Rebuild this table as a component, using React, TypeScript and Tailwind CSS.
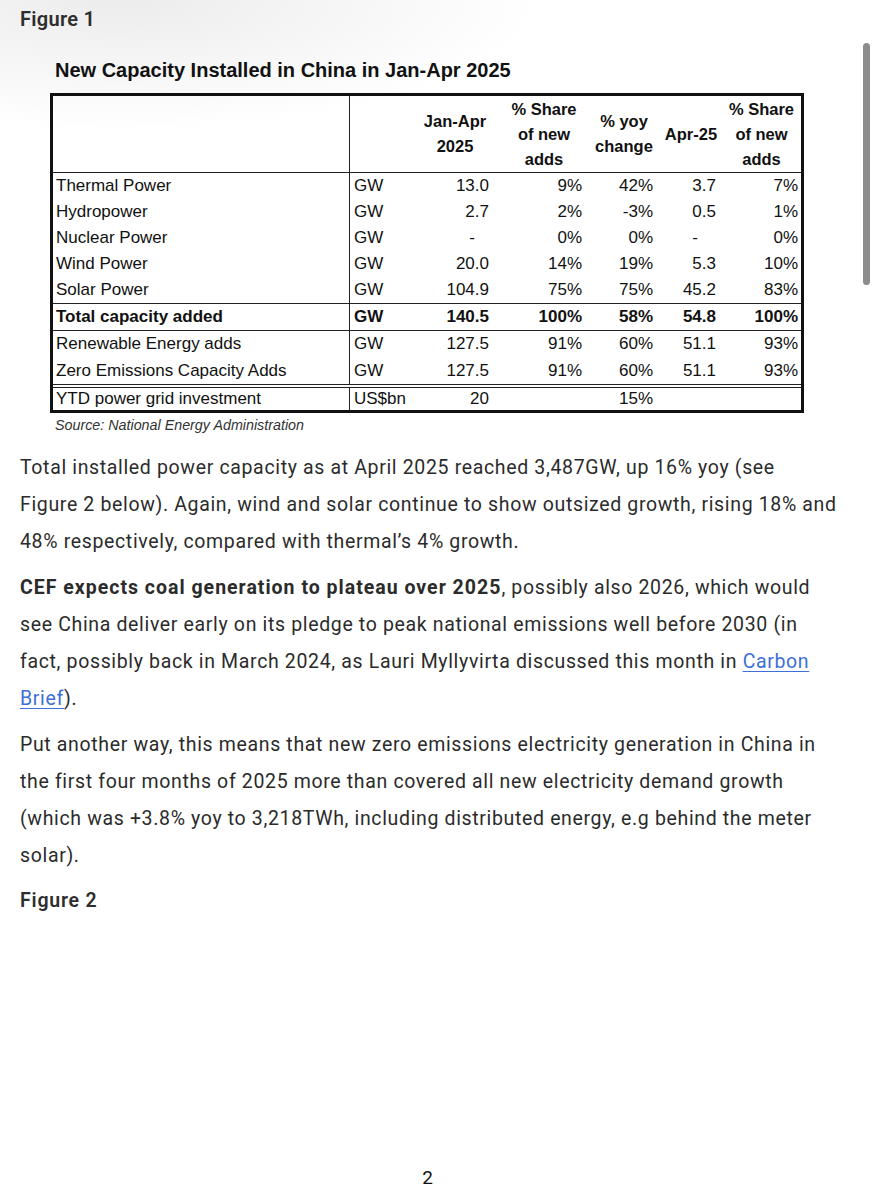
import React from "react";

type Cell = { t?: string; dash?: boolean };

const TABLE_FONT = "font-['Liberation_Sans',Arial,sans-serif]";

function DataRow({
  label,
  unit,
  vals,
  bold,
  h,
  border,
}: {
  label: string;
  unit: string;
  vals: Cell[];
  bold?: boolean;
  h: string;
  border: string;
}) {
  const w = bold ? "font-bold" : "font-normal";
  return (
    <div className={`flex ${h} ${border} ${w} text-[17px] leading-[26px] text-[#111]`}>
      <div className="w-[297px] shrink-0 border-r border-[#222] pl-[3px] flex items-center whitespace-nowrap">
        {label}
      </div>
      <div className="w-[61px] shrink-0 pl-[4px] flex items-center">{unit}</div>
      <div className={`w-[88px] shrink-0 flex items-center justify-end ${vals[0].dash ? "pr-[24px]" : "pr-[10px]"}`}>
        {vals[0].t}
      </div>
      <div className="w-[90px] shrink-0 flex items-center justify-end pr-[7px]">{vals[1].t}</div>
      <div className="w-[70px] shrink-0 flex items-center justify-end pr-[6px]">{vals[2].t}</div>
      <div className={`w-[64px] shrink-0 flex items-center justify-end ${vals[3].dash ? "pr-[25px]" : "pr-[7px]"}`}>
        {vals[3].t}
      </div>
      <div className="w-[77px] shrink-0 flex items-center justify-end pr-[2px]">{vals[4].t}</div>
    </div>
  );
}

const rows: { label: string; vals: Cell[] }[] = [
  { label: "Thermal Power", vals: [{ t: "13.0" }, { t: "9%" }, { t: "42%" }, { t: "3.7" }, { t: "7%" }] },
  { label: "Hydropower", vals: [{ t: "2.7" }, { t: "2%" }, { t: "-3%" }, { t: "0.5" }, { t: "1%" }] },
  { label: "Nuclear Power", vals: [{ t: "-", dash: true }, { t: "0%" }, { t: "0%" }, { t: "-", dash: true }, { t: "0%" }] },
  { label: "Wind Power", vals: [{ t: "20.0" }, { t: "14%" }, { t: "19%" }, { t: "5.3" }, { t: "10%" }] },
  { label: "Solar Power", vals: [{ t: "104.9" }, { t: "75%" }, { t: "75%" }, { t: "45.2" }, { t: "83%" }] },
];

function CapacityTable() {
  return (
    <div className={`${TABLE_FONT} ml-[50px] w-[754px] border-[3px] border-[#111]`}>
      {/* header */}
      <div className="flex h-[77px] border-b border-[#222] text-[16.5px] leading-[25px] font-bold text-[#111]">
        <div className="w-[297px] shrink-0 border-r border-[#222]" />
        <div className="w-[61px] shrink-0" />
        <div className="w-[88px] shrink-0 flex items-center justify-center text-center">
          Jan-Apr
          <br />
          2025
        </div>
        <div className="w-[90px] shrink-0 flex items-center justify-center text-center">
          % Share
          <br />
          of new
          <br />
          adds
        </div>
        <div className="w-[70px] shrink-0 flex items-center justify-center text-center">
          % yoy
          <br />
          change
        </div>
        <div className="w-[64px] shrink-0 flex items-center justify-center text-center">Apr-25</div>
        <div className="w-[77px] shrink-0 flex items-center justify-center text-center">
          % Share
          <br />
          of new
          <br />
          adds
        </div>
      </div>
      {rows.map((r, i) => (
        <DataRow
          key={r.label}
          label={r.label}
          unit="GW"
          vals={r.vals}
          h={i === rows.length - 1 ? "h-[27px]" : "h-[26px]"}
          border={i === rows.length - 1 ? "border-b border-[#222]" : ""}
        />
      ))}
      <DataRow
        label="Total capacity added"
        unit="GW"
        bold
        vals={[{ t: "140.5" }, { t: "100%" }, { t: "58%" }, { t: "54.8" }, { t: "100%" }]}
        h="h-[27px]"
        border="border-b border-[#222]"
      />
      <DataRow
        label="Renewable Energy adds"
        unit="GW"
        vals={[{ t: "127.5" }, { t: "91%" }, { t: "60%" }, { t: "51.1" }, { t: "93%" }]}
        h="h-[26px]"
        border=""
      />
      <DataRow
        label="Zero Emissions Capacity Adds"
        unit="GW"
        vals={[{ t: "127.5" }, { t: "91%" }, { t: "60%" }, { t: "51.1" }, { t: "93%" }]}
        h="h-[31px]"
        border="border-b-[4px] border-double border-[#222]"
      />
      <DataRow
        label="YTD power grid investment"
        unit="US$bn"
        vals={[{ t: "20" }, { t: "" }, { t: "15%" }, { t: "" }, { t: "" }]}
        h="h-[22px]"
        border=""
      />
    </div>
  );
}

export default function App() {
  return (
    <div className="relative w-[877px] min-h-[1200px] bg-white flex flex-col bg-[radial-gradient(ellipse_420px_130px_at_120px_0px,#ececec,#ffffff)]">
      {/* scrollbar overlay */}
      <div className="absolute left-[863px] top-[43px] w-[7px] h-[242px] rounded-full bg-[#8c8c8c]" />

      <div className="px-[20px] pt-[6px] font-['Roboto',sans-serif] text-[#2b2b2b]">
        <div className="text-[20px] leading-[26px] font-semibold tracking-[0.3px] text-[#2e2e2e]">Figure 1</div>

        <div className={`${TABLE_FONT} mt-[26px] ml-[35px] text-[20px] leading-[24px] font-bold text-[#111]`}>
          New Capacity Installed in China in Jan-Apr 2025
        </div>

        <div className="mt-[11px] -ml-[20px]">
          <CapacityTable />
        </div>

        <div className={`${TABLE_FONT} mt-[3px] ml-[35px] text-[14.3px] leading-[18px] italic text-[#333]`}>
          Source: National Energy Administration
        </div>

        <div className="w-[845px] text-[19.5px] leading-[37px] tracking-[0.65px] whitespace-nowrap">
          <p className="mt-[15px]">
            Total installed power capacity as at April 2025 reached 3,487GW, up 16% yoy (see
            <br />
            Figure 2 below). Again, wind and solar continue to show outsized growth, rising 18% and
            <br />
            48% respectively, compared with thermal’s 4% growth.
          </p>
          <p className="mt-[9px]">
            <span className="font-bold tracking-[1px]">CEF expects coal generation to plateau over 2025</span>, possibly
            also 2026, which would
            <br />
            see China deliver early on its pledge to peak national emissions well before 2030 (in
            <br />
            fact, possibly back in March 2024, as Lauri Myllyvirta discussed this month in{" "}
            <a href="#" className="text-[#3d6fd6] underline underline-offset-[3px]">
              Carbon
              <br />
              Brief
            </a>
            ).
          </p>
          <p className="mt-[9px]">
            Put another way, this means that new zero emissions electricity generation in China in
            <br />
            the first four months of 2025 more than covered all new electricity demand growth
            <br />
            (which was +3.8% yoy to 3,218TWh, including distributed energy, e.g behind the meter
            <br />
            solar).
          </p>
          <p className="mt-[8px] font-semibold tracking-[0.8px] text-[#2e2e2e]">Figure 2</p>
        </div>
      </div>

      <div className="flex-1" />
      <div className="pb-[11px] pr-[22px] text-center font-['Roboto',sans-serif] text-[19px] leading-[22px] text-[#111]">
        2
      </div>
    </div>
  );
}
